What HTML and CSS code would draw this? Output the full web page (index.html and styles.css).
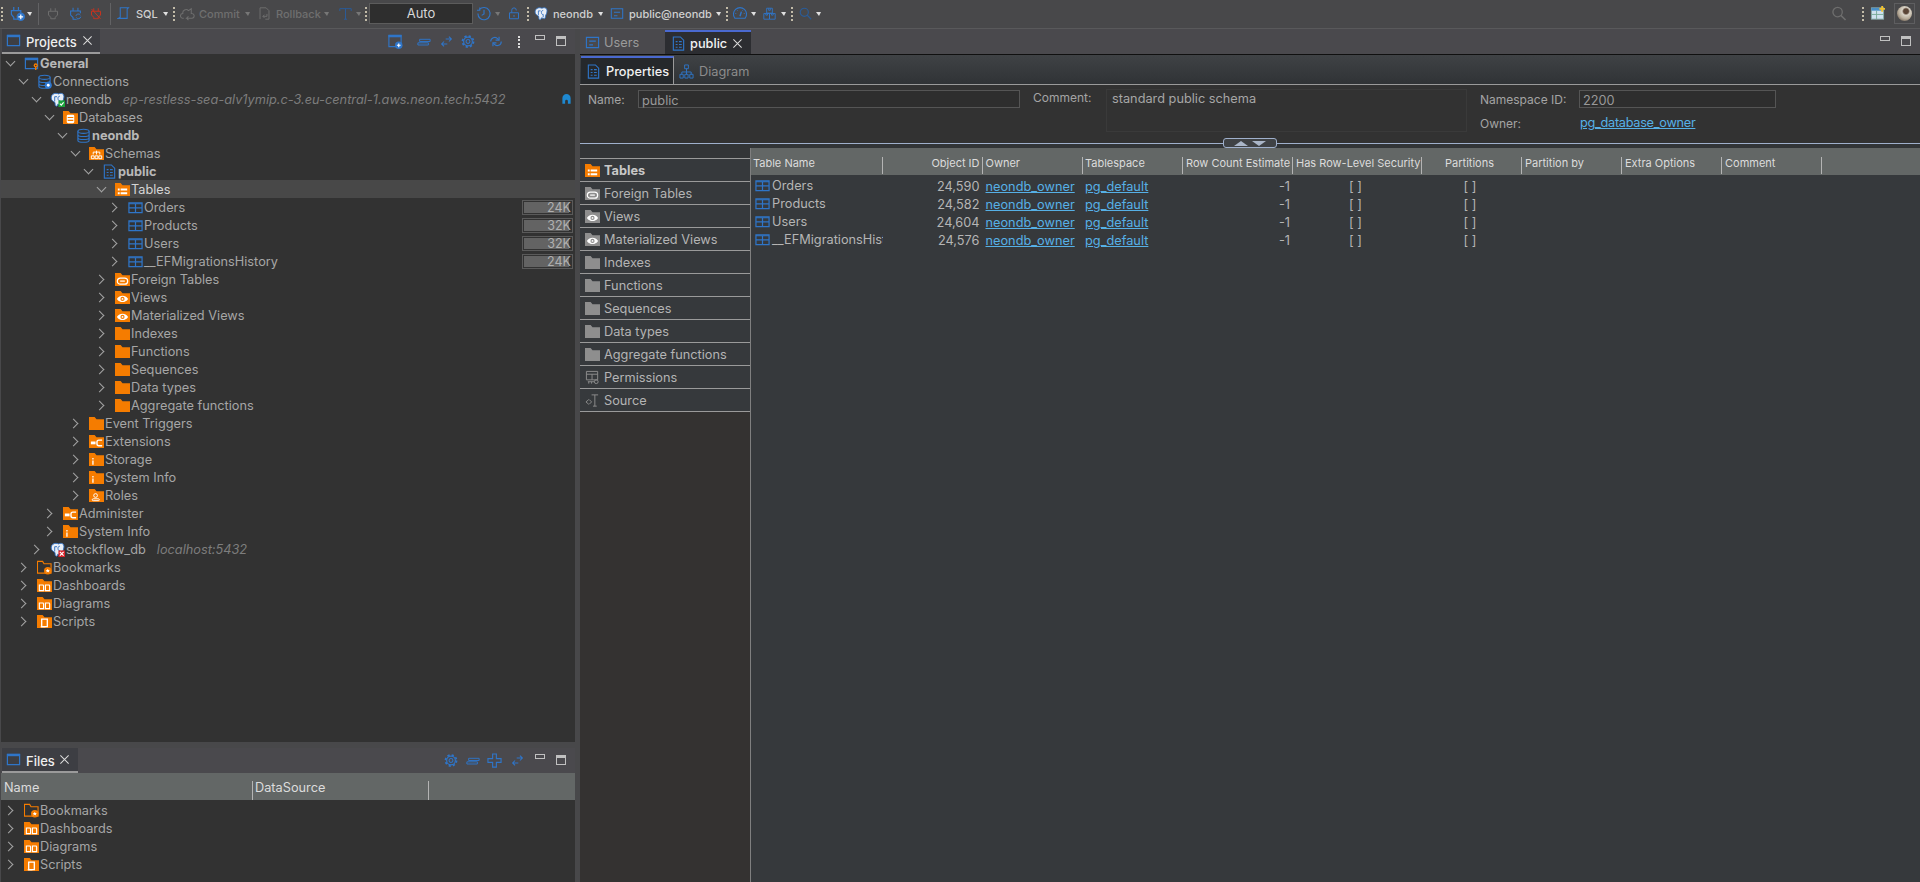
FILE: index.html
```html
<!DOCTYPE html>
<html>
<head>
	<title>DBeaver</title>
	<link rel="stylesheet" href="styles.css">
</head>
<body>
	<svg class="sprites" width="0" height="0">
		<symbol id="x" viewBox="0 0 12 12"><path d="M1.500 1.500l9 9M10.500 1.500l-9 9" stroke="currentColor" stroke-width="1.100" fill="none"/></symbol>
		<symbol id="folder" viewBox="0 0 16 16"><path d="M0 1h6l2 2.500h8V15H0z" fill="currentColor"/></symbol>
		<symbol id="f-list" viewBox="0 0 16 16"><use href="#folder"/><path d="M3 7h2v2H3zM6 7h7v2H6zM3 11h2v2H3zM6 11h7v2H6z" fill="#fff"/></symbol>
		<symbol id="f-db" viewBox="0 0 16 16"><use href="#folder"/><rect x="4" y="5" width="8" height="9" rx="1.500" fill="#fff"/><path d="M5 8h6M5 11h6" stroke="#f57c00" stroke-width="1.200"/></symbol>
		<symbol id="f-schema" viewBox="0 0 16 16"><use href="#folder"/><path d="M4.500 9V6.500h7V9M8 5v4" stroke="#fff" fill="none"/><path d="M2.500 10.500h3v3h-3zM6.500 10.500h3v3h-3zM10.500 10.500h3v3h-3z" stroke="#fff" fill="none"/></symbol>
		<symbol id="f-link" viewBox="0 0 16 16"><use href="#folder"/><rect x="2.500" y="6.500" width="11" height="6.500" rx="3.200" stroke="#fff" stroke-width="1.300" fill="none"/><path d="M5.500 9.700h5" stroke="#fff" stroke-width="1.300"/></symbol>
		<symbol id="f-eye" viewBox="0 0 16 16"><use href="#folder"/><path d="M2 9.500c3-4.500 9-4.500 12 0-3 4.500-9 4.500-12 0z" fill="#fff"/><circle cx="8" cy="9.500" r="2.200" fill="currentColor"/><circle cx="8" cy="9.500" r="1" fill="#fff"/></symbol>
		<symbol id="f-ext" viewBox="0 0 16 16"><use href="#folder"/><path d="M2 8h5v3H2z" fill="#fff"/><path d="M14 6.500h-3.500a2 2 0 0 0-2 2v2a2 2 0 0 0 2 2H14" stroke="#fff" stroke-width="1.500" fill="none"/></symbol>
		<symbol id="f-info" viewBox="0 0 16 16"><use href="#folder"/><path d="M3.500 6.500h1.400v1.500H3.500zM3.500 9h1.400v4.500H3.500z" fill="#fff"/></symbol>
		<symbol id="f-user" viewBox="0 0 16 16"><use href="#folder"/><circle cx="7" cy="8" r="2" stroke="#fff" fill="none"/><rect x="3.500" y="11.500" width="7.500" height="2" rx="1" stroke="#fff" fill="none"/></symbol>
		<symbol id="f-board" viewBox="0 0 16 16"><use href="#folder"/><path d="M2.500 7.500h4l.5 1v5H2.500zM9 7.500h4l.5 1v5H9z" stroke="#fff" fill="none" stroke-width="1.200"/></symbol>
		<symbol id="f-script" viewBox="0 0 16 16"><use href="#folder"/><path d="M5 5.500h6v8H5z" stroke="#fff" stroke-width="1.400" fill="none"/><path d="M4 13.500h5" stroke="#fff" stroke-width="1.400"/></symbol>
		<symbol id="f-mark" viewBox="0 0 16 16"><path d="M.5 1.500h5.500l1.500 2.500h7.500v10H.5z" fill="none" stroke="currentColor" stroke-width="1.200"/><circle cx="11.500" cy="11.500" r="4" fill="currentColor"/><path d="M11.500 9.200l.7 1.500 1.600.1-1.200 1 .4 1.600-1.500-.8-1.500.8.400-1.600-1.200-1 1.600-.1z" fill="#fff"/></symbol>
		<symbol id="table" viewBox="0 0 16 16"><path d="M1 3h14v10.500H1z" fill="none" stroke="currentColor" stroke-width="1.300"/><path d="M1 4h14M1 8.500h14M8 4v9.500" stroke="currentColor" stroke-width="1.300"/></symbol>
		<symbol id="win" viewBox="0 0 16 16"><path d="M1.500 2.500h13v11h-13z" fill="none" stroke="currentColor" stroke-width="1.300"/><path d="M1 2h14v2.500H1z" fill="currentColor"/></symbol>
		<symbol id="win-key" viewBox="0 0 16 16"><use href="#win"/><circle cx="12.500" cy="10" r="2.200" fill="#f57c00"/><path d="M12.500 11v4" stroke="#f57c00" stroke-width="1.500"/><circle cx="12.500" cy="10" r=".8" fill="#323232"/></symbol>
		<symbol id="win-add" viewBox="0 0 16 16"><path d="M1.500 1.500h13v12h-13z" fill="none" stroke="currentColor" stroke-width="1.200"/><path d="M1 1h14v2.500H1z" fill="currentColor"/><circle cx="12" cy="12" r="4" fill="currentColor"/><path d="M10 12h4M12 10v4" stroke="#fff" stroke-width="1.200"/></symbol>
		<symbol id="db" viewBox="0 0 16 16"><g fill="none" stroke="currentColor" stroke-width="1.200"><ellipse cx="8" cy="3.500" rx="6" ry="2.200"/><path d="M2 3.500v9.500c0 1.200 2.700 2.200 6 2.200s6-1 6-2.200V3.500M2 6.800c0 1.200 2.700 2.200 6 2.200s6-1 6-2.200M2 10c0 1.200 2.700 2.200 6 2.200s6-1 6-2.200"/></g></symbol>
		<symbol id="db-gear" viewBox="0 0 16 16"><use href="#db"/><circle cx="12" cy="12" r="3.800" fill="#2f78d0"/><circle cx="12" cy="12" r="1.500" fill="#fff"/></symbol>
		<symbol id="doc" viewBox="0 0 16 16"><path d="M2.500 1h7.500l3.500 3.500V15h-11z" fill="none" stroke="currentColor" stroke-width="1.200"/><path d="M5 6h2M5 9h2M5 12h2M8.500 6h3M8.500 9h3M8.500 12h3" stroke="currentColor" stroke-width="1.200"/></symbol>
		<symbol id="schema-doc" viewBox="0 0 16 16"><path d="M1.500 2.500h13v11h-13z" fill="none" stroke="currentColor" stroke-width="1.200"/><path d="M4.500 6.500h7M4.500 10.500h4" stroke="currentColor" stroke-width="1.200"/></symbol>
		<symbol id="diagram" viewBox="0 0 16 16"><path d="M6 1h4v4H6zM1 11h3.500v4H1zM6.200 11h3.500v4H6.200zM11.500 11H15v4h-3.500z" fill="none" stroke="currentColor"/><path d="M8 5v3.500M3 11V8.500h10V11M8 8.500V11" fill="none" stroke="currentColor"/></symbol>
		<symbol id="pg" viewBox="0 0 16 16"><path d="M3 2.500C5 .8 8 1.500 9 2c2-1 4.500-.8 5.500 1 .9 1.800.2 4.800-1 6.800-.5 1-.4 2.500-.7 3.400-.6 1-1.800.8-2.300-.2-.6.4-1.600.4-2.200 0-.3 1.500-.8 2.500-2 2-1-.5-.7-2.500-1-3.800C3.500 10 1.500 9 1.300 6.500 1.200 5 1.800 3.500 3 2.500z" fill="#e8eef6" stroke="#2f6fc0"/><path d="M5 5v5M5 5h2.500M10.500 4.500c-1.500 0-2 1-2 2.500s1 2.500 2 2v3" stroke="#2f6fc0" fill="none"/></symbol>
		<symbol id="pg-ok" viewBox="0 0 16 16"><use href="#pg"/><rect x="9" y="9" width="7" height="7" fill="#1aa33c"/><path d="M10.500 12.500l1.500 1.500 2.500-3" stroke="#fff" fill="none" stroke-width="1.200"/></symbol>
		<symbol id="pg-off" viewBox="0 0 16 16"><use href="#pg"/><rect x="9" y="9" width="7" height="7" fill="#d8232a"/><path d="M10.500 10.500l4 4M14.500 10.500l-4 4" stroke="#fff" stroke-width="1.300"/></symbol>
		<symbol id="arrows" viewBox="0 0 16 16"><g fill="none" stroke="currentColor" stroke-width="1.300"><path d="M7 5h7M11 2l3 3-3 3"/><path d="M9 11H2M5 8l-3 3 3 3"/></g></symbol>
		<symbol id="collapse" viewBox="0 0 16 16"><path d="M3 5.500h12v2.500H3zM1 9.500h12V12H1z" fill="none" stroke="currentColor" stroke-width="1.100"/></symbol>
		<symbol id="gear" viewBox="0 0 16 16"><circle cx="8" cy="8" r="5" fill="none" stroke="currentColor" stroke-width="1.300"/><circle cx="8" cy="8" r="6.300" fill="none" stroke="currentColor" stroke-width="2" stroke-dasharray="2.500 2.450"/><circle cx="8" cy="8" r="2.200" fill="none" stroke="currentColor" stroke-width="1.200"/></symbol>
		<symbol id="sync" viewBox="0 0 16 16"><g fill="none" stroke="currentColor" stroke-width="1.300"><path d="M2 8a4.500 4.500 0 0 1 8-3l1 1"/><path d="M14 8a4.500 4.500 0 0 1-8 3l-1-1"/><path d="M11.500 2.500V6.500H7.500M4.500 13.500V9.500H8.500"/></g></symbol>
		<symbol id="plus" viewBox="0 0 16 16"><path d="M6 1h4v5h5v4h-5v5H6v-5H1V6h5z" fill="none" stroke="currentColor" stroke-width="1.200"/></symbol>
		<symbol id="plug" viewBox="0 0 16 16"><path d="M5 1v4M11 1v4M2 5h12v5l-3 3v2H5v-2l-3-3z" fill="none" stroke="currentColor" stroke-width="1.300"/></symbol>
		<symbol id="plug-sync" viewBox="0 0 16 16"><use href="#plug"/><circle cx="11.500" cy="11.500" r="4.300" fill="#48484a"/><path d="M8.500 11a3 3 0 0 1 5.500-1M14.500 12a3 3 0 0 1-5.500 1" fill="none" stroke="currentColor" stroke-width="1.200"/></symbol>
		<symbol id="plug-off" viewBox="0 0 16 16"><use href="#plug"/><path d="M2 2l12 13" stroke="currentColor" stroke-width="1.300"/></symbol>
		<symbol id="plug-add" viewBox="0 0 16 16"><path d="M4 1v4M9 1v4M1.500 5h10v4l-2.500 3v2h-5v-2L1.500 9z" fill="none" stroke="currentColor" stroke-width="1.300"/><circle cx="11.500" cy="11.500" r="4.500" fill="currentColor"/><path d="M9 11.500h5M11.500 9v5" stroke="#fff" stroke-width="1.300"/></symbol>
		<symbol id="scroll" viewBox="0 0 16 16"><path d="M4 1h10l-1.500 1.500V14H1.500l2.500-1.500z" fill="none" stroke="currentColor" stroke-width="1.300"/></symbol>
		<symbol id="cloud" viewBox="0 0 16 16"><path d="M4 13H3a2.500 2.500 0 0 1 0-5 3.500 3.500 0 0 1 6-3l3-2v5a2.500 2.500 0 0 1 1 5H7l2-2M7 13l2 2" fill="none" stroke="currentColor" stroke-width="1.100"/></symbol>
		<symbol id="rollback" viewBox="0 0 16 16"><path d="M2.500 15V1H10l3.500 3.500V15H9" fill="none" stroke="currentColor" stroke-width="1.200"/><path d="M11 8.500v3H6M8 9.500l-2 2 2 2" fill="none" stroke="currentColor" stroke-width="1.200"/></symbol>
		<symbol id="tcell" viewBox="0 0 16 16"><path d="M1 2h14M8 2v13M6 15h4M1 2v3M12 5h.01M12 8h.01M12 11h.01M15 2v3" fill="none" stroke="currentColor" stroke-width="1.200"/></symbol>
		<symbol id="clock" viewBox="0 0 16 16"><path d="M3 4a6.500 6.500 0 1 1-1.500 4M.5 4.500h3v-3M8 4v4.500l-2.500 1.500" fill="none" stroke="currentColor" stroke-width="1.200"/></symbol>
		<symbol id="lock" viewBox="0 0 16 16"><path d="M2 7h12v8H2zM5 7V3.500a3 3 0 0 1 6 0V4M8 10v2.500" fill="none" stroke="currentColor" stroke-width="1.300"/></symbol>
		<symbol id="gauge" viewBox="0 0 16 16"><path d="M2.500 13a7 7 0 1 1 11 0z" fill="none" stroke="currentColor" stroke-width="1.200"/><path d="M8 11l1.500-5" stroke="currentColor" stroke-width="1.500"/><path d="M3 8h1M12 8h1M5 4.500l.6.600M11 4.500l-.6.600" stroke="currentColor"/></symbol>
		<symbol id="boxes" viewBox="0 0 16 16"><path d="M4.500 1.500h7v6h-7zM1 8h7v7H1zM8 8h7v7H8zM7 1.500v2.500h2V1.500M3.500 8v2h2V8M10.500 8v2h2V8" fill="none" stroke="currentColor" stroke-width="1.100"/></symbol>
		<symbol id="search" viewBox="0 0 16 16"><circle cx="6.500" cy="6.500" r="5" fill="none" stroke="currentColor" stroke-width="1.400"/><path d="M10 10l5 5" stroke="currentColor" stroke-width="1.600"/></symbol>
		<symbol id="dash" viewBox="0 0 16 16"><rect x="1.500" y="2" width="13" height="12" fill="#cfe2ef" stroke="#8aa"/><path d="M1.500 2h13v3h-13z" fill="#4a90c8"/><path d="M1.500 9h13M7 5v9" stroke="#7a9"/><path d="M13 0v6M10 3h6" stroke="#f2c230" stroke-width="2"/></symbol>
		<symbol id="lock-small" viewBox="0 0 16 16"><path d="M2 14V6a6 6 0 0 1 12 0v8h-4v-3.500a2 2 0 0 0-4 0V14z" fill="#1e88d0"/></symbol>
		<symbol id="perm" viewBox="0 0 16 16"><path d="M1.500 1.500h12v9h-12zM1.500 4.500h12M7.500 4.500v6" fill="none" stroke="currentColor"/><circle cx="12" cy="12.500" r="2" fill="none" stroke="currentColor"/><path d="M3 12.500h7M4 12.500v2M7 12.500v2" stroke="currentColor"/></symbol>
		<symbol id="source" viewBox="0 0 16 16"><path d="M7 2h7M10.500 2v12M8.500 14h4M4 7L1 9.500 4 12M4.500 7l2.500 2.500L4.500 12" fill="none" stroke="currentColor"/></symbol>
	</svg>

	<div class="toolbar">
		<i class="grip"></i>
		<svg class="tb-ico blue w15 g7"><use href="#plug-add"/></svg><i class="drop g2"></i>
		<i class="vsep g6"></i>
		<svg class="tb-ico grey w12 g8"><use href="#plug"/></svg>
		<svg class="tb-ico blue w13 g10"><use href="#plug-sync"/></svg>
		<svg class="tb-ico red w12 g8"><use href="#plug-off"/></svg>
		<i class="vsep g8"></i>
		<svg class="tb-ico blue w13 g6"><use href="#scroll"/></svg>
		<span class="tb-text lbl-sql g6">SQL</span><i class="drop g6"></i>
		<i class="grip g5"></i>
		<svg class="tb-ico grey w15 g5"><use href="#cloud"/></svg>
		<span class="tb-text off lbl-commit g4">Commit</span><i class="drop dim g6"></i>
		<svg class="tb-ico grey w13 g8"><use href="#rollback"/></svg>
		<span class="tb-text off lbl-rollback g5">Rollback</span><i class="drop dim g4"></i>
		<svg class="tb-ico blue-dim w13 g10"><use href="#tcell"/></svg><i class="drop dim g4"></i>
		<i class="grip g4"></i>
		<div class="auto g2">Auto</div>
		<svg class="tb-ico blue w16 g3"><use href="#clock"/></svg><i class="drop dim g3"></i>
		<svg class="tb-ico blue w12 g8"><use href="#lock"/></svg>
		<i class="grip g7"></i>
		<svg class="tb-ico w14 g5"><use href="#pg"/></svg>
		<span class="tb-text lbl-neondb g5">neondb</span><i class="drop g6"></i>
		<svg class="tb-ico blue w14 g7"><use href="#schema-doc"/></svg>
		<span class="tb-text lbl-public g5">public@neondb</span><i class="drop g6"></i>
		<i class="grip g5"></i>
		<svg class="tb-ico blue w16 g4"><use href="#gauge"/></svg><i class="drop g3"></i>
		<svg class="tb-ico blue w13 g7"><use href="#boxes"/></svg><i class="drop g5"></i>
		<i class="grip g5"></i>
		<svg class="tb-ico blue-dim w13 g6"><use href="#search"/></svg><i class="drop g4"></i>

		<div class="tb-right">
			<svg class="tb-ico grey w16"><use href="#search"/></svg>
			<i class="grip g15"></i>
			<svg class="tb-ico w15 g6"><use href="#dash"/></svg>
			<div class="avatar g9"><span></span></div>
		</div>
	</div>

	<div class="main">
		<div class="left">
			<div class="panel projects">
				<div class="panel-head">
					<div class="view-tab tab-projects">
						<svg class="ico blue"><use href="#win"/></svg>
						<span class="view-title">Projects</span>
						<svg class="close"><use href="#x"/></svg>
					</div>
					<div class="tools">
						<svg class="tool blue w16"><use href="#win-add"/></svg>
						<svg class="tool blue w14 g14"><use href="#collapse"/></svg>
						<svg class="tool blue w13 g9"><use href="#arrows"/></svg>
						<svg class="tool blue w14 g8"><use href="#gear"/></svg>
						<svg class="tool blue w14 g14"><use href="#sync"/></svg>
						<i class="kebab g15"></i>
						<i class="min g15"></i>
						<i class="max g11"></i>
					</div>
				</div>
				<div class="tree">
					<div class="row d0"><i class="chev open"></i><svg class="ico blue"><use href="#win-key"/></svg><span class="b">General</span></div>
					<div class="row d1"><i class="chev open"></i><svg class="ico blue"><use href="#db-gear"/></svg><span>Connections</span></div>
					<div class="row d2"><i class="chev open"></i><svg class="ico"><use href="#pg-ok"/></svg><span>neondb</span><span class="sub">ep-restless-sea-alv1ymip.c-3.eu-central-1.aws.neon.tech:5432</span><svg class="lock-mark"><use href="#lock-small"/></svg></div>
					<div class="row d3"><i class="chev open"></i><svg class="ico org"><use href="#f-db"/></svg><span>Databases</span></div>
					<div class="row d4"><i class="chev open"></i><svg class="ico blue"><use href="#db"/></svg><span class="b">neondb</span></div>
					<div class="row d5"><i class="chev open"></i><svg class="ico org"><use href="#f-schema"/></svg><span>Schemas</span></div>
					<div class="row d6"><i class="chev open"></i><svg class="ico blue"><use href="#doc"/></svg><span class="b">public</span></div>
					<div class="row d7 sel"><i class="chev open"></i><svg class="ico org"><use href="#f-list"/></svg><span>Tables</span></div>
					<div class="row d8"><i class="chev"></i><svg class="ico blue"><use href="#table"/></svg><span>Orders</span><div class="size"><i class="size-fill"></i><span>24K</span></div></div>
					<div class="row d8"><i class="chev"></i><svg class="ico blue"><use href="#table"/></svg><span>Products</span><div class="size"><i class="size-fill"></i><span>32K</span></div></div>
					<div class="row d8"><i class="chev"></i><svg class="ico blue"><use href="#table"/></svg><span>Users</span><div class="size"><i class="size-fill"></i><span>32K</span></div></div>
					<div class="row d8"><i class="chev"></i><svg class="ico blue"><use href="#table"/></svg><span>__EFMigrationsHistory</span><div class="size"><i class="size-fill"></i><span>24K</span></div></div>
					<div class="row d7"><i class="chev"></i><svg class="ico org"><use href="#f-link"/></svg><span>Foreign Tables</span></div>
					<div class="row d7"><i class="chev"></i><svg class="ico org"><use href="#f-eye"/></svg><span>Views</span></div>
					<div class="row d7"><i class="chev"></i><svg class="ico org"><use href="#f-eye"/></svg><span>Materialized Views</span></div>
					<div class="row d7"><i class="chev"></i><svg class="ico org"><use href="#folder"/></svg><span>Indexes</span></div>
					<div class="row d7"><i class="chev"></i><svg class="ico org"><use href="#folder"/></svg><span>Functions</span></div>
					<div class="row d7"><i class="chev"></i><svg class="ico org"><use href="#folder"/></svg><span>Sequences</span></div>
					<div class="row d7"><i class="chev"></i><svg class="ico org"><use href="#folder"/></svg><span>Data types</span></div>
					<div class="row d7"><i class="chev"></i><svg class="ico org"><use href="#folder"/></svg><span>Aggregate functions</span></div>
					<div class="row d5"><i class="chev"></i><svg class="ico org"><use href="#folder"/></svg><span>Event Triggers</span></div>
					<div class="row d5"><i class="chev"></i><svg class="ico org"><use href="#f-ext"/></svg><span>Extensions</span></div>
					<div class="row d5"><i class="chev"></i><svg class="ico org"><use href="#f-info"/></svg><span>Storage</span></div>
					<div class="row d5"><i class="chev"></i><svg class="ico org"><use href="#f-info"/></svg><span>System Info</span></div>
					<div class="row d5"><i class="chev"></i><svg class="ico org"><use href="#f-user"/></svg><span>Roles</span></div>
					<div class="row d3"><i class="chev"></i><svg class="ico org"><use href="#f-ext"/></svg><span>Administer</span></div>
					<div class="row d3"><i class="chev"></i><svg class="ico org"><use href="#f-info"/></svg><span>System Info</span></div>
					<div class="row d2"><i class="chev"></i><svg class="ico"><use href="#pg-off"/></svg><span>stockflow_db</span><span class="sub">localhost:5432</span></div>
					<div class="row d1"><i class="chev"></i><svg class="ico org"><use href="#f-mark"/></svg><span>Bookmarks</span></div>
					<div class="row d1"><i class="chev"></i><svg class="ico org"><use href="#f-board"/></svg><span>Dashboards</span></div>
					<div class="row d1"><i class="chev"></i><svg class="ico org"><use href="#f-board"/></svg><span>Diagrams</span></div>
					<div class="row d1"><i class="chev"></i><svg class="ico org"><use href="#f-script"/></svg><span>Scripts</span></div>
				</div>
			</div>

			<div class="panel files">
				<div class="panel-head">
					<div class="view-tab tab-files">
						<svg class="ico blue"><use href="#win"/></svg>
						<span class="view-title">Files</span>
						<svg class="close"><use href="#x"/></svg>
					</div>
					<div class="tools">
						<svg class="tool blue w14"><use href="#gear"/></svg>
						<svg class="tool blue w14 g8"><use href="#collapse"/></svg>
						<svg class="tool blue w15 g7"><use href="#plus"/></svg>
						<svg class="tool blue w13 g9"><use href="#arrows"/></svg>
						<i class="min g11"></i>
						<i class="max g11"></i>
					</div>
				</div>
				<div class="files-head">
					<div class="fh-name">Name</div>
					<div class="fh-source">DataSource</div>
				</div>
				<div class="tree files-tree">
					<div class="row d0"><i class="chev"></i><svg class="ico org"><use href="#f-mark"/></svg><span>Bookmarks</span></div>
					<div class="row d0"><i class="chev"></i><svg class="ico org"><use href="#f-board"/></svg><span>Dashboards</span></div>
					<div class="row d0"><i class="chev"></i><svg class="ico org"><use href="#f-board"/></svg><span>Diagrams</span></div>
					<div class="row d0"><i class="chev"></i><svg class="ico org"><use href="#f-script"/></svg><span>Scripts</span></div>
				</div>
			</div>
		</div>

		<div class="right">
			<div class="editor-tabs">
				<div class="etab">
					<svg class="ico blue"><use href="#schema-doc"/></svg>
					<span>Users</span>
				</div>
				<div class="etab active">
					<svg class="ico blue"><use href="#doc"/></svg>
					<span>public</span>
					<svg class="close"><use href="#x"/></svg>
				</div>
				<div class="tools">
					<i class="min"></i>
					<i class="max g11"></i>
				</div>
			</div>

			<div class="subtabs">
				<div class="subtab active">
					<svg class="ico blue"><use href="#doc"/></svg>
					<span>Properties</span>
				</div>
				<div class="subtab">
					<svg class="ico blue"><use href="#diagram"/></svg>
					<span>Diagram</span>
				</div>
			</div>

			<div class="form">
				<label class="lbl">Name:</label>
				<div class="input">public</div>
				<label class="lbl lbl-top">Comment:</label>
				<div class="comment">standard public schema</div>
				<label class="lbl">Namespace ID:</label>
				<div class="input">2200</div>
				<label class="lbl lbl-owner">Owner:</label>
				<a class="link owner-link">pg_database_owner</a>
			</div>

			<div class="divider"><div class="sash"><i class="tri up"></i><i class="tri down"></i></div></div>

			<div class="content">
				<div class="folders">
					<div class="folder-list">
						<div class="fitem on"><svg class="ico org"><use href="#f-list"/></svg><span>Tables</span></div>
						<div class="fitem"><svg class="ico gr"><use href="#f-link"/></svg><span>Foreign Tables</span></div>
						<div class="fitem"><svg class="ico gr"><use href="#f-eye"/></svg><span>Views</span></div>
						<div class="fitem"><svg class="ico gr"><use href="#f-eye"/></svg><span>Materialized Views</span></div>
						<div class="fitem"><svg class="ico gr"><use href="#folder"/></svg><span>Indexes</span></div>
						<div class="fitem"><svg class="ico gr"><use href="#folder"/></svg><span>Functions</span></div>
						<div class="fitem"><svg class="ico gr"><use href="#folder"/></svg><span>Sequences</span></div>
						<div class="fitem"><svg class="ico gr"><use href="#folder"/></svg><span>Data types</span></div>
						<div class="fitem"><svg class="ico gr"><use href="#folder"/></svg><span>Aggregate functions</span></div>
						<div class="fitem"><svg class="ico gr"><use href="#perm"/></svg><span>Permissions</span></div>
						<div class="fitem"><svg class="ico gr"><use href="#source"/></svg><span>Source</span></div>
					</div>
					<div class="folder-rest"></div>
				</div>

				<div class="grid">
					<div class="grid-head cols">
						<div class="hc">Table Name</div>
						<div class="hc right-a">Object ID</div>
						<div class="hc">Owner</div>
						<div class="hc">Tablespace</div>
						<div class="hc">Row Count Estimate</div>
						<div class="hc">Has Row-Level Security</div>
						<div class="hc center-a">Partitions</div>
						<div class="hc">Partition by</div>
						<div class="hc">Extra Options</div>
						<div class="hc">Comment</div>
					</div>
					<div class="grid-row cols">
						<div class="c c-name"><svg class="ico blue"><use href="#table"/></svg><span>Orders</span></div>
						<div class="c num">24,590</div><div class="c"><a class="link">neondb_owner</a></div><div class="c"><a class="link">pg_default</a></div><div class="c num">-1</div><div class="c mid">[ ]</div><div class="c mid">[ ]</div>
					</div>
					<div class="grid-row cols">
						<div class="c c-name"><svg class="ico blue"><use href="#table"/></svg><span>Products</span></div>
						<div class="c num">24,582</div><div class="c"><a class="link">neondb_owner</a></div><div class="c"><a class="link">pg_default</a></div><div class="c num">-1</div><div class="c mid">[ ]</div><div class="c mid">[ ]</div>
					</div>
					<div class="grid-row cols">
						<div class="c c-name"><svg class="ico blue"><use href="#table"/></svg><span>Users</span></div>
						<div class="c num">24,604</div><div class="c"><a class="link">neondb_owner</a></div><div class="c"><a class="link">pg_default</a></div><div class="c num">-1</div><div class="c mid">[ ]</div><div class="c mid">[ ]</div>
					</div>
					<div class="grid-row cols">
						<div class="c c-name"><svg class="ico blue"><use href="#table"/></svg><span>__EFMigrationsHistory</span></div>
						<div class="c num">24,576</div><div class="c"><a class="link">neondb_owner</a></div><div class="c"><a class="link">pg_default</a></div><div class="c num">-1</div><div class="c mid">[ ]</div><div class="c mid">[ ]</div>
					</div>
				</div>
			</div>
		</div>
	</div>
</body>
</html>
```

FILE: styles.css
```css
*{
	padding:0;
	margin:0;
	box-sizing:border-box;
}
body{
	width:1920px;
	height:882px;
	overflow:hidden;
	display:flex;
	flex-direction:column;
	background-color:#48484a;
	color:#a6a6a6;
	font-family:"Inter","Liberation Sans",sans-serif;
	font-size:12.75px;
}
i{
	display:block;
	flex:none;
}
svg{
	display:block;
	flex:none;
}
.sprites{
	position:absolute;
}

/* spacing + sizes shared by toolbars */
.g2{margin-left:2px;}
.g3{margin-left:3px;}
.g4{margin-left:4px;}
.g5{margin-left:5px;}
.g6{margin-left:6px;}
.g7{margin-left:7px;}
.g8{margin-left:8px;}
.g9{margin-left:9px;}
.g10{margin-left:10px;}
.g11{margin-left:11px;}
.g14{margin-left:14px;}
.g15{margin-left:15px;}
.w12{width:12px;height:15px;}
.w13{width:13px;height:15px;}
.w14{width:14px;height:15px;}
.w15{width:15px;height:15px;}
.w16{width:16px;height:15px;}
.blue{color:#2f75c8;}
.blue-dim{color:#2a5c98;}
.grey{color:#6e6e6e;}
.red{color:#c8321e;}
.org{color:#f57c00;}
.gr{color:#8e8e8e;}

/* top toolbar */
.toolbar{
	height:29px;
	flex:none;
	display:flex;
	align-items:center;
	padding:0 5px 1px 1px;
	border-bottom:1px solid #59595b;
}
.grip{
	width:2px;
	height:14px;
	border-left:2px dotted #c2bba8;
}
.vsep{
	width:1px;
	height:22px;
	background-color:#626264;
}
.drop{
	width:0;
	height:0;
	border-left:3px solid transparent;
	border-right:2px solid transparent;
	border-top:4px solid #e0e0e0;
}
.drop.dim{
	border-top-color:#777;
}
.tb-text{
	font-size:11px;
	font-weight:500;
	color:#d0d0d0;
	white-space:nowrap;
}
.tb-text.off{
	color:#6f6f6f;
}
.lbl-sql{width:21px;}
.lbl-commit{width:40px;}
.lbl-rollback{width:44px;}
.lbl-neondb{width:39px;}
.lbl-public{width:81px;}
.auto{
	width:104px;
	height:21px;
	line-height:19px;
	text-align:center;
	background-color:#2e2e2e;
	border:1px solid #5c5c5c;
	color:#d8d8d8;
	font-size:13px;
}
.tb-right{
	margin-left:auto;
	display:flex;
	align-items:center;
}
.avatar{
	width:21px;
	height:21px;
	border:1px solid #5e5e60;
	display:flex;
	align-items:center;
	justify-content:center;
}
.avatar span{
	width:15px;
	height:15px;
	border-radius:50%;
	background:radial-gradient(circle at 60% 35%,#5a4536 0,#5a4536 18%,#d8d2c6 30%,#b9ae9c 55%,#4a3a2e 100%);
}

/* layout */
.main{
	flex:1;
	display:flex;
	min-height:0;
}
.left{
	width:574px;
	margin-left:1px;
	display:flex;
	flex-direction:column;
	gap:6px;
	flex:none;
}
.panel{
	display:flex;
	flex-direction:column;
	background-color:#323232;
}
.projects{
	height:713px;
}
.files{
	flex:1;
	min-height:0;
}
.panel-head{
	height:25px;
	flex:none;
	display:flex;
	align-items:center;
	background-color:#4a494d;
}
.view-tab{
	height:25px;
	margin-left:1px;
	display:flex;
	align-items:center;
	padding-left:4px;
	background-color:#3d3e43;
	border-bottom:2px solid #9a9a9a;
}
.tab-projects{width:98px;padding-right:7px;}
.tab-files{width:76px;padding-right:8px;}
.view-title{
	margin:2px 0 0 5px;
	color:#efefef;
	font-weight:500;
	font-size:13px;
}
.close{
	width:11px;
	height:11px;
	margin-left:auto;
	color:#dcdcdc;
}
.tools{
	margin-left:auto;
	padding-right:9px;
	display:flex;
	align-items:center;
}
.kebab{
	width:2px;
	height:12px;
	border-left:2px dotted #dcdcdc;
}
.min{
	width:10px;
	height:5px;
	margin-bottom:8px;
	border:1px solid #c0c0c0;
}
.max{
	width:10px;
	height:10px;
	margin-bottom:2px;
	border:1px solid #c0c0c0;
	border-top-width:3px;
}

/* tree */
.tree{
	flex:1;
	min-height:0;
	overflow:hidden;
}
.row{
	height:18px;
	display:flex;
	align-items:center;
	white-space:nowrap;
}
.row.sel{
	background-color:#484848;
	color:#d4d4d4;
}
.d0{padding-left:4px;}
.d1{padding-left:17px;}
.d2{padding-left:30px;}
.d3{padding-left:43px;}
.d4{padding-left:56px;}
.d5{padding-left:69px;}
.d6{padding-left:82px;}
.d7{padding-left:95px;}
.d8{padding-left:108px;}
.chev{
	width:12px;
	height:12px;
	display:flex;
	align-items:center;
	justify-content:center;
}
.chev::before{
	content:"";
	width:6px;
	height:6px;
	border-right:1.300px solid #a4a4a4;
	border-bottom:1.300px solid #a4a4a4;
	transform:translateX(-3px) rotate(-45deg);
}
.chev.open::before{
	transform:translate(-1px,-2px) rotate(45deg);
}
.ico{
	width:15px;
	height:15px;
}
.row .ico{
	margin:0 1px 0 7px;
}
.b{
	font-weight:700;
	color:#b8b8b8;
}
.sub{
	margin-left:11px;
	font-style:italic;
	color:#7d7d7d;
}
.lock-mark{
	width:11px;
	height:11px;
	margin-left:auto;
	margin-right:3px;
}
.size{
	margin-left:auto;
	margin-right:2px;
	width:51px;
	height:15px;
	border:1px solid #5a5a5a;
	position:relative;
	text-align:right;
	line-height:13px;
	font-size:12.500px;
	padding-right:1px;
	color:#b0b0b0;
}
.size span{
	position:relative;
}
.size-fill{
	position:absolute;
	left:1px;
	top:1px;
	bottom:1px;
	right:3px;
	background-color:#636363;
}
.files-head{
	height:27px;
	flex:none;
	display:flex;
	background-color:#636766;
	color:#dcdcdc;
}
.fh-name{
	width:251px;
	padding-left:3px;
	line-height:29px;
}
.fh-source{
	width:177px;
	padding-left:2px;
	border-left:1px solid #b4b4b4;
	border-right:1px solid #b4b4b4;
	margin-top:8px;
	height:19px;
	line-height:13px;
}
.files-tree{
	padding-top:1px;
}

/* right side */
.right{
	margin-left:5px;
	flex:1;
	min-width:0;
	display:flex;
	flex-direction:column;
}
.editor-tabs{
	height:26px;
	flex:none;
	display:flex;
	align-items:center;
	padding-top:1px;
	background-color:#4a494d;
	border-bottom:1px solid #101010;
}
.etab{
	height:24px;
	display:flex;
	align-items:center;
	padding-left:5px;
	width:85px;
	color:#9b9b9b;
	gap:4px;
}
.etab.active{
	width:86px;
	padding:0 8px 0 6px;
	background-color:#2c2d31;
	border-top:2px solid #4a69d0;
	color:#f2f2f2;
	font-weight:500;
}
.subtabs{
	height:30px;
	flex:none;
	display:flex;
	align-items:flex-end;
	padding-left:1px;
	background:linear-gradient(#3f4245,#303336);
	border-bottom:1px solid #9a9a9a;
}
.subtab{
	height:28px;
	display:flex;
	align-items:center;
	padding:2px 5px 0;
	gap:5px;
	color:#8c8c8c;
}
.subtab.active{
	width:93px;
	padding-top:0;
	background-color:#25282b;
	border-top:2px solid #4a69d0;
	border-right:1px solid #9a9a9a;
	color:#f0f0f0;
	font-weight:500;
}
.form{
	height:58px;
	flex:none;
	display:grid;
	grid-template-columns:50px 382px 86px 361px 112px 197px;
	grid-template-rows:20px 23px;
	padding:4px 0 0 8px;
	background-color:#323232;
}
.lbl{
	color:#a4a4a4;
	font-size:12px;
	line-height:22px;
}
.lbl:nth-of-type(2),.lbl:nth-of-type(3),.lbl:nth-of-type(4){
	margin-left:13px;
}
.lbl-top{
	line-height:17px;
}
.input{
	height:18px;
	margin-top:1px;
	line-height:19px;
	padding-left:3px;
	border:1px solid #555;
	background-color:#2e2e2e;
	color:#999;
}
.comment{
	grid-row:1 / span 2;
	grid-column:4;
	border:1px solid #3a3a3a;
	padding:1px 5px;
	line-height:16px;
	color:#a6a6a6;
}
.lbl-owner{
	grid-column:5;
	grid-row:2;
	line-height:30px;
}
.owner-link{
	grid-column:6;
	grid-row:2;
	line-height:28px;
	padding-left:1px;
	letter-spacing:-0.3px;
}
.link{
	color:#56b0e6;
	text-decoration:underline;
}
.divider{
	height:5px;
	flex:none;
	position:relative;
	border-top:1px solid #9fb0cc;
	background-color:#323537;
}
.sash{
	position:absolute;
	left:643px;
	top:-6px;
	width:54px;
	height:10px;
	display:flex;
	align-items:center;
	justify-content:center;
	gap:4px;
	background-color:#3f4245;
	border:1px solid #9fb0cc;
	border-radius:3px;
}
.tri{
	width:0;
	height:0;
	border-left:7px solid transparent;
	border-right:7px solid transparent;
}
.tri.up{
	border-bottom:5px solid #aab6c8;
}
.tri.down{
	border-top:5px solid #aab6c8;
}
.content{
	flex:1;
	min-height:0;
	display:flex;
	background-color:#36393c;
}
.folders{
	width:170px;
	flex:none;
	display:flex;
	flex-direction:column;
	padding-top:10px;
	background-color:#333537;
}
.folder-list{
	background-color:#36393c;
	border-bottom:1px solid #9a9a9a;
}
.folder-rest{
	flex:1;
	background-color:#343231;
}
.fitem{
	height:23px;
	display:flex;
	align-items:center;
	gap:4px;
	padding-left:5px;
	border-top:1px solid #9a9a9a;
	color:#b4b4b4;
}
.fitem.on{
	font-weight:700;
	color:#c8c8c8;
}
.grid{
	flex:1;
	min-width:0;
	border-left:1px solid #7f7f7f;
}
.cols{
	display:grid;
	grid-template-columns:131.500px 100px 100.500px 100px 110px 129px 100px 100px 100px 100px 1fr;
}
.cols > :nth-child(4){
	padding-left:2px;
}
.grid-head{
	height:27px;
	background-color:#636766;
	color:#dcdcdc;
	font-size:11px;
}
.hc{
	height:17px;
	margin-top:9px;
	padding-left:3px;
	line-height:12px;
	border-right:1px solid #b4b4b4;
	white-space:nowrap;
	overflow:visible;
}
.hc:first-child{
	padding-left:2px;
}
.right-a{
	text-align:right;
	padding-right:2px;
}
.center-a{
	text-align:center;
	padding:0 4px 0 0;
}
.grid-row{
	height:18px;
	line-height:20px;
	color:#b5b5b5;
}
.grid-row:nth-child(2){
	margin-top:2px;
}
.c{
	padding-left:3px;
	white-space:nowrap;
	overflow:hidden;
}
.c-name{
	display:flex;
	align-items:center;
	gap:2px;
	padding-left:4px;
}
.c-name .ico{
	margin-top:-2px;
}
.num{
	text-align:right;
	padding-right:3px;
}
.mid{
	text-align:center;
	padding:0 4px 0 0;
}
```
